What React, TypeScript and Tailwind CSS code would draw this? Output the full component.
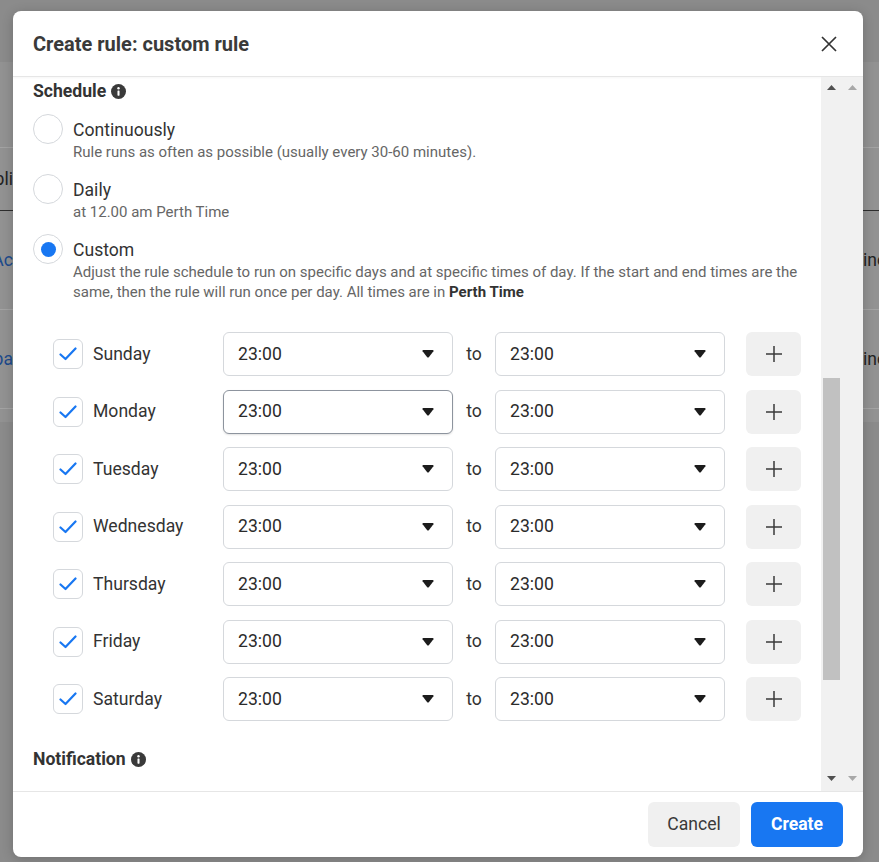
import React from 'react';

const DAYS = ['Sunday', 'Monday', 'Tuesday', 'Wednesday', 'Thursday', 'Friday', 'Saturday'];

function InfoIcon() {
  return (
    <svg width="15" height="15" viewBox="0 0 16 16" className="shrink-0">
      <circle cx="8" cy="8" r="8" fill="#3a3a3a" />
      <circle cx="8" cy="4.6" r="1.3" fill="#fff" />
      <rect x="6.9" y="6.8" width="2.2" height="5.6" rx="0.6" fill="#fff" />
    </svg>
  );
}

function Caret() {
  return (
    <svg width="12" height="8" viewBox="0 0 12 8">
      <path d="M0.6 1.2 Q0 0 1.4 0 H10.6 Q12 0 11.4 1.2 L6.8 7.2 Q6 8 5.2 7.2 Z" fill="#1c1c1c" />
    </svg>
  );
}

function TimeSelect({ focused }: { focused?: boolean }) {
  return (
    <div
      className={
        focused
          ? 'flex h-[44px] w-[230px] items-center justify-between rounded-[6px] border border-[#8d949e] bg-white pl-[14px] pr-[18px] shadow-[0_1px_2px_rgba(0,0,0,0.12)]'
          : 'flex h-[44px] w-[230px] items-center justify-between rounded-[6px] border border-[#d5d8dc] bg-white pl-[14px] pr-[18px]'
      }
    >
      <span className="text-[17.6px] text-[#2b2b2b]">23:00</span>
      <Caret />
    </div>
  );
}

function Checkbox() {
  return (
    <div className="flex h-[30px] w-[30px] shrink-0 items-center justify-center rounded-[6px] border border-[#d5d8dc] bg-white">
      <svg width="18" height="14" viewBox="0 0 18 14">
        <path d="M1.5 7.5 L6.5 12 L16.5 1.5" fill="none" stroke="#1877f2" strokeWidth="2.2" strokeLinecap="round" strokeLinejoin="round" />
      </svg>
    </div>
  );
}

function Radio({ checked }: { checked?: boolean }) {
  return (
    <div className="flex h-[30px] w-[30px] shrink-0 items-center justify-center rounded-full border border-[#d5d8dc] bg-white">
      {checked && <div className="h-[15px] w-[15px] rounded-full bg-[#1877f2]" />}
    </div>
  );
}

function Option({ label, checked, children }: { label: string; checked?: boolean; children: React.ReactNode }) {
  return (
    <div className="flex items-start gap-[10px]">
      <Radio checked={checked} />
      <div className="flex flex-col">
        <div className="mt-[5px] text-[17.6px] leading-[22px] text-[#333]">{label}</div>
        <div className="mt-[1px] text-[15px] leading-[20px] text-[#666]">{children}</div>
      </div>
    </div>
  );
}

function DayRow({ day, focused }: { day: string; focused?: boolean }) {
  return (
    <div className="flex h-[44px] items-center">
      <Checkbox />
      <span className="ml-[10px] w-[130px] text-[17.6px] text-[#333]">{day}</span>
      <TimeSelect focused={focused} />
      <span className="w-[42px] text-center text-[17.6px] text-[#333]">to</span>
      <TimeSelect />
      <button className="ml-[21px] flex h-[44px] w-[55px] items-center justify-center rounded-[6px] bg-[#f0f0f0]">
        <svg width="18" height="18" viewBox="0 0 18 18">
          <path d="M9 1 V17 M1 9 H17" stroke="#3a3a3a" strokeWidth="1.5" />
        </svg>
      </button>
    </div>
  );
}

function Arrow({ up, color }: { up?: boolean; color: string }) {
  return (
    <svg width="9" height="5" viewBox="0 0 9 5">
      <path d={up ? 'M0 5 L4.5 0 L9 5 Z' : 'M0 0 L4.5 5 L9 0 Z'} fill={color} />
    </svg>
  );
}

function Background() {
  return (
    <div className="flex h-full w-full flex-col bg-[#8b8b8b]">
      <div className="h-[62px]" />
      <div className="flex flex-col bg-[#929292]">
        <div className="h-[86px] border-b border-[#a3a3a3]" />
        <div className="flex h-[63px] items-center justify-between border-b border-[#2e2e2e] text-[17.6px] text-[#222]">
          <div className="flex w-[13px] justify-end overflow-hidden whitespace-nowrap">Appli</div>
        </div>
        <div className="flex h-[99px] items-center justify-between border-b border-[#a3a3a3] text-[17.6px]">
          <div className="flex w-[13px] justify-end overflow-hidden whitespace-nowrap text-[#1d4a8c]">Ac</div>
          <div className="w-[16px] overflow-hidden whitespace-nowrap text-[#222]">inc</div>
        </div>
        <div className="flex h-[99px] items-center justify-between border-b border-[#a3a3a3] text-[17.6px]">
          <div className="flex w-[13px] justify-end overflow-hidden whitespace-nowrap text-[#1d4a8c]">Cpa</div>
          <div className="w-[16px] overflow-hidden whitespace-nowrap text-[#222]">inc</div>
        </div>
        <div className="h-[13px]" />
      </div>
    </div>
  );
}

export default function App() {
  return (
    <div className="relative h-[862px] w-[879px] overflow-hidden font-['Roboto',_'Liberation_Sans',_sans-serif]">
      <Background />

      <div className="absolute left-[13px] top-[11px] flex h-[846px] w-[850px] flex-col overflow-hidden rounded-[8px] bg-white shadow-[0_2px_12px_rgba(0,0,0,0.2)]">
        <div className="flex h-[66px] shrink-0 items-center justify-between border-b border-[#e6e6e6] pl-[20px] pr-[26px] shadow-[0_1px_2px_rgba(0,0,0,0.04)]">
          <h2 className="text-[20px] font-bold text-[#3a3a3a]">Create rule: custom rule</h2>
          <svg width="16" height="16" viewBox="0 0 16 16">
            <path d="M1 1 L15 15 M15 1 L1 15" stroke="#333" strokeWidth="1.7" />
          </svg>
        </div>

        <div className="flex h-[714px] shrink-0">
          <div className="flex flex-1 flex-col pl-[20px] pt-[4px]">
            <div className="flex h-[20px] items-center gap-[5px]">
              <span className="text-[17.6px] font-bold text-[#333]">Schedule</span>
              <InfoIcon />
            </div>
            <div className="mt-[13px] flex flex-col gap-[12px]">
              <Option label="Continuously">Rule runs as often as possible (usually every 30-60 minutes).</Option>
              <Option label="Daily">at 12.00 am Perth Time</Option>
              <Option label="Custom" checked>
                Adjust the rule schedule to run on specific days and at specific times of day. If the start and end times are the
                same, then the rule will run once per day. All times are in <b className="text-[#333]">Perth Time</b>
              </Option>
            </div>
            <div className="mt-[30px] flex flex-col gap-[13.5px] pl-[20px]">
              {DAYS.map((d) => (
                <DayRow key={d} day={d} focused={d === 'Monday'} />
              ))}
            </div>
            <div className="mt-[28px] flex h-[20px] items-center gap-[5px]">
              <span className="text-[17.6px] font-bold text-[#333]">Notification</span>
              <InfoIcon />
            </div>
          </div>

          <div className="flex w-[42px] shrink-0 bg-[#f1f1f1]">
            <div className="flex w-[21px] flex-col items-center pt-[8px]">
              <Arrow up color="#505050" />
              <div className="mt-[288px] h-[302px] w-[17px] bg-[#c1c1c1]" />
              <div className="mt-auto pb-[10px]">
                <Arrow color="#505050" />
              </div>
            </div>
            <div className="flex w-[21px] flex-col items-center justify-between pb-[10px] pt-[8px]">
              <Arrow up color="#a8a8a8" />
              <Arrow color="#a8a8a8" />
            </div>
          </div>
        </div>

        <div className="flex flex-1 items-start justify-end gap-[11px] border-t border-[#e6e6e6] pr-[20px] pt-[10px]">
          <button className="h-[45px] w-[92px] rounded-[6px] bg-[#f0f0f0] text-[17.6px] text-[#3a3a3a]">Cancel</button>
          <button className="h-[45px] w-[92px] rounded-[6px] bg-[#1877f2] text-[17.6px] font-bold text-white">Create</button>
        </div>
      </div>
    </div>
  );
}
